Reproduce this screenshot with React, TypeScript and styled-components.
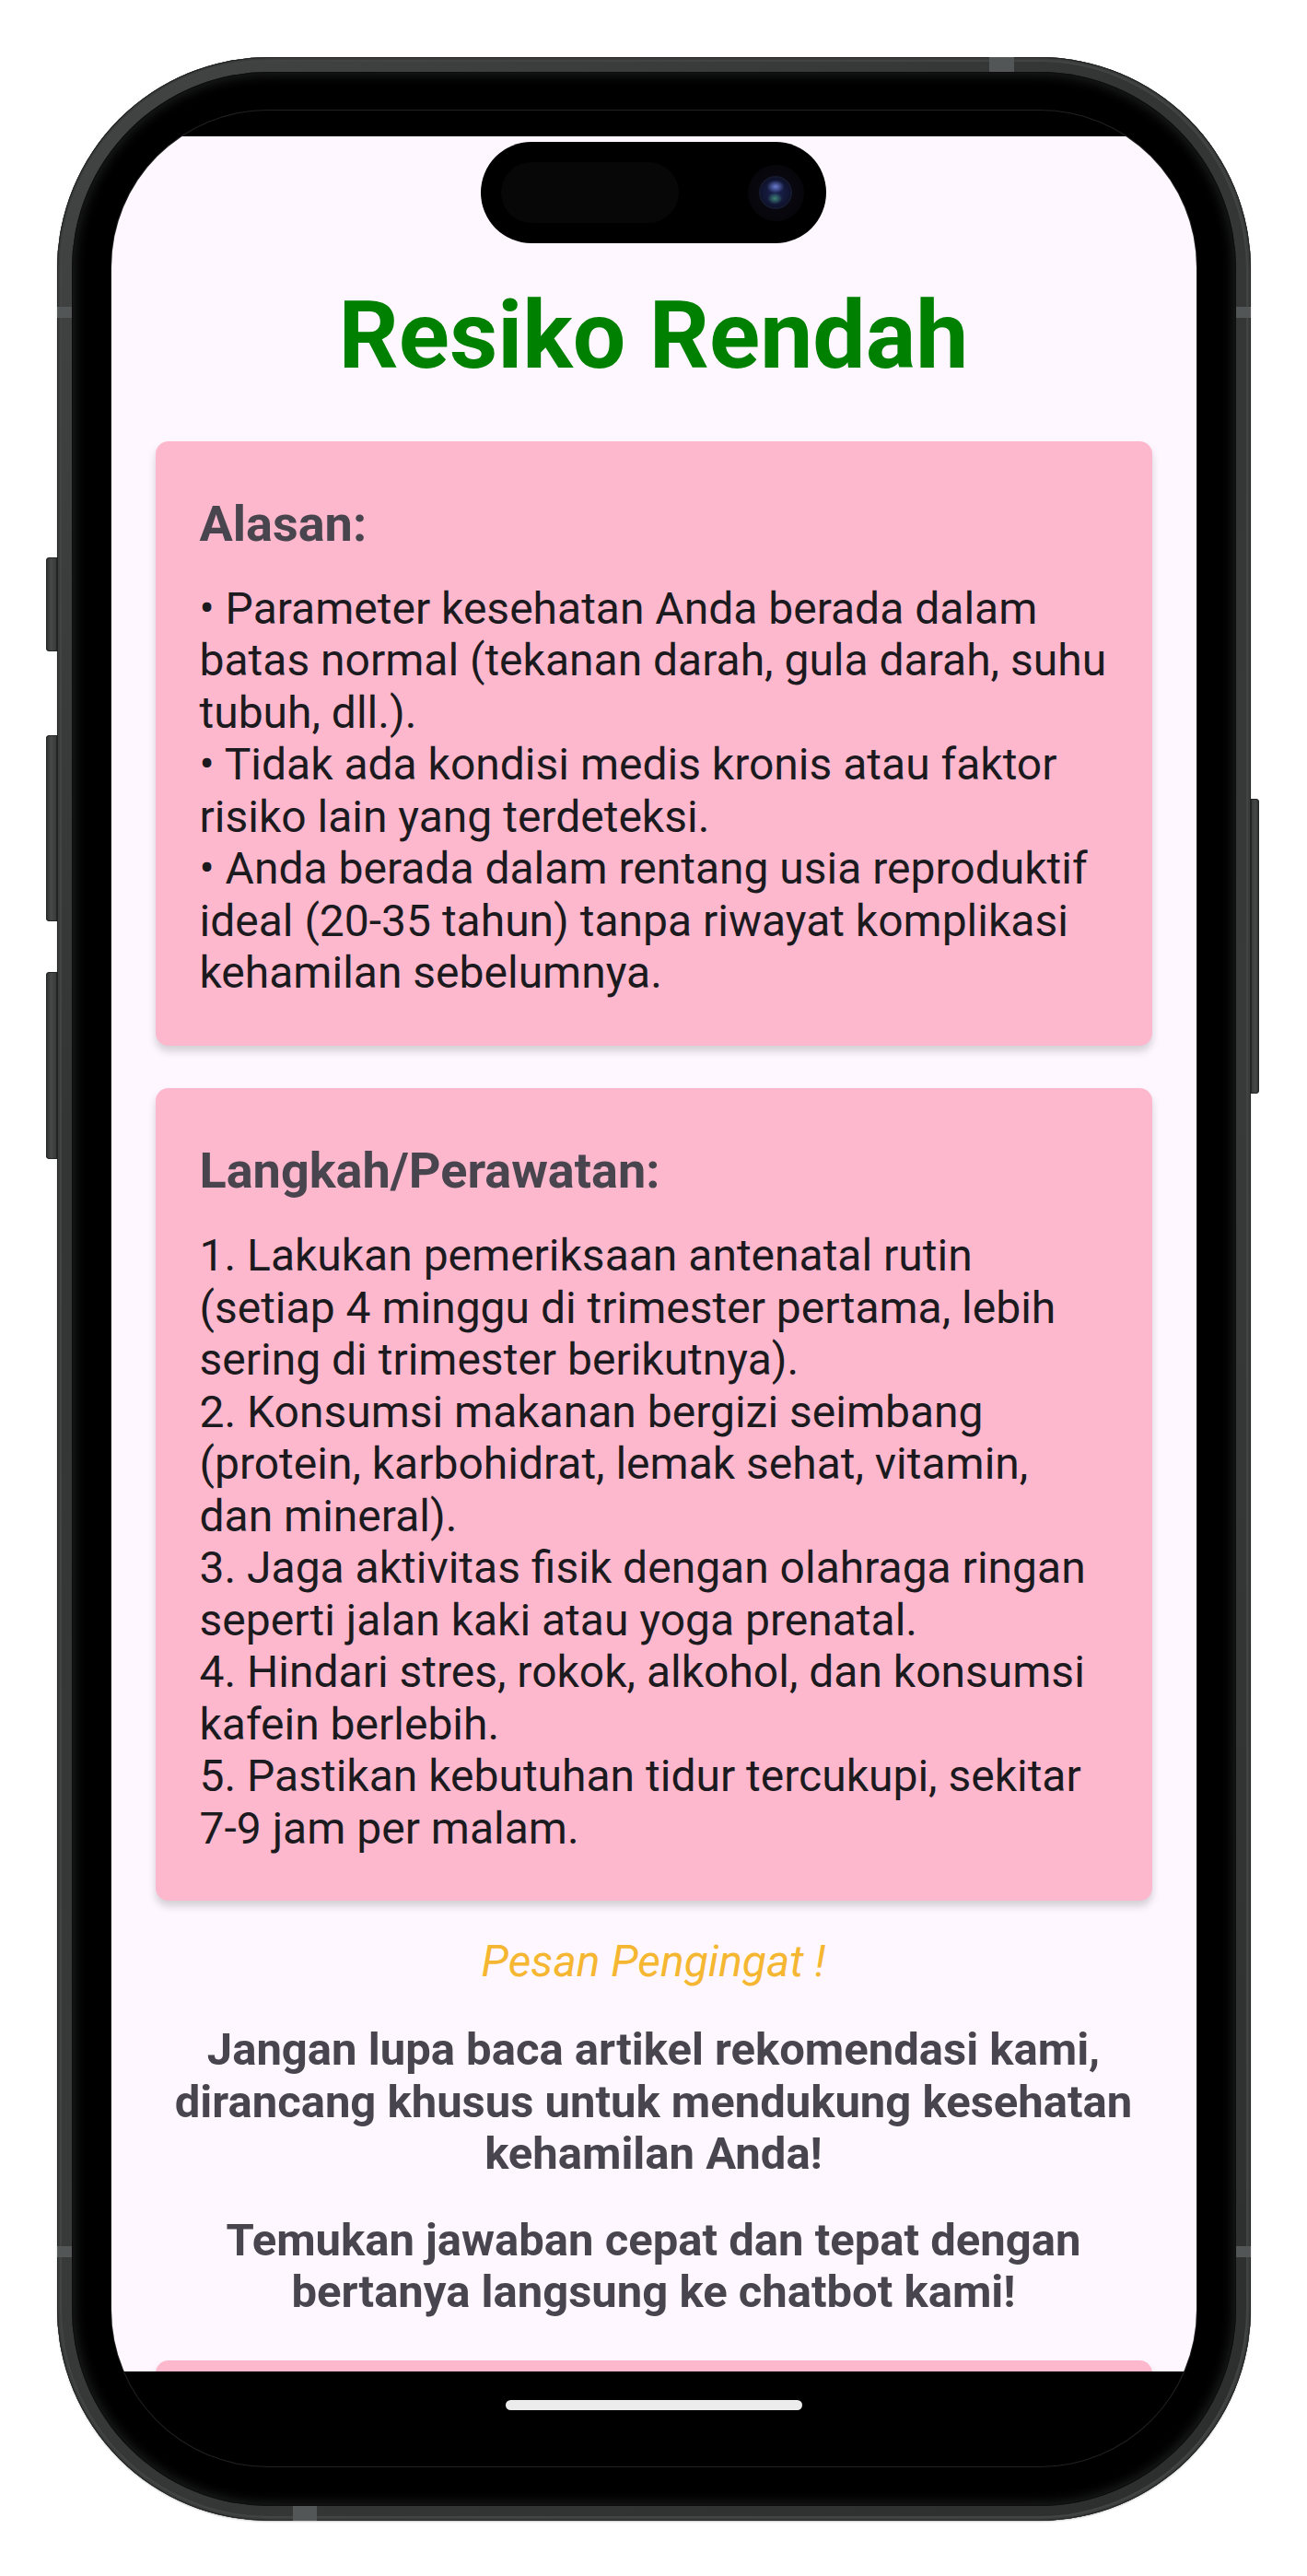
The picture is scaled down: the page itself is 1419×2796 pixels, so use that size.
import React from "react";
import styled, { createGlobalStyle } from "styled-components";

const GlobalStyle = createGlobalStyle`
  html, body {
    margin: 0;
    padding: 0;
    background: #ffffff;
  }
  body {
    font-family: Roboto, "Noto Sans", "Liberation Sans", Arial, sans-serif;
    -webkit-font-smoothing: antialiased;
  }
  * { box-sizing: border-box; }
`;

const Stage = styled.main`
  width: 1419px;
  height: 2796px;
  padding-top: 62px;
  display: flex;
  justify-content: center;
  align-items: flex-start;
  background: #ffffff;
`;

const Phone = styled.div`
  position: relative;
  width: 1296px;
  height: 2674px;
  padding: 16px;
  border-radius: 230px;
  background: linear-gradient(135deg, #434545 0%, #333535 30%, #383a3a 60%, #2c2e2e 100%);
  box-shadow:
    inset 0 0 0 1px #222323,
    inset 0 0 0 3px #3b3d3d,
    inset 0 0 0 5px #424444,
    0 1px 2px rgba(0, 0, 0, 0.25);
`;

const SideButton = styled.div<{ $side: "left" | "right"; $top: number; $height: number }>`
  position: absolute;
  top: ${(p) => p.$top}px;
  height: ${(p) => p.$height}px;
  width: ${(p) => (p.$side === "left" ? 12 : 9)}px;
  ${(p) => (p.$side === "left" ? "left: -12px;" : "right: -9px;")}
  border-radius: ${(p) => (p.$side === "left" ? "4px 0 0 4px" : "0 4px 4px 0")};
  background: linear-gradient(
    ${(p) => (p.$side === "left" ? "90deg" : "270deg")},
    #2c2e2e 0%,
    #474949 45%,
    #363838 100%
  );
  box-shadow: inset 0 0 0 1px #232525;
`;

const AntennaBand = styled.div<{ $pos: "top" | "bottom" | "left" | "right"; $offset: number }>`
  position: absolute;
  background: #535656;
  ${(p) =>
    p.$pos === "top"
      ? `top: 0; left: ${p.$offset}px; width: 27px; height: 16px;`
      : p.$pos === "bottom"
      ? `bottom: 0; left: ${p.$offset}px; width: 26px; height: 16px;`
      : p.$pos === "left"
      ? `left: 0; top: ${p.$offset}px; width: 16px; height: 12px;`
      : `right: 0; top: ${p.$offset}px; width: 16px; height: 12px;`}
`;

const Bezel = styled.div`
  width: 100%;
  height: 100%;
  border-radius: 214px;
  background: #000000;
  padding: 42px 43px 43px 43px;
  box-shadow:
    inset 0 0 0 1px #0d0d0d,
    inset 0 0 14px 2px rgba(70, 72, 72, 0.5);
`;

const Screen = styled.div`
  width: 100%;
  height: 100%;
  border-radius: 170px;
  overflow: hidden;
  background: #000000;
  padding-top: 28px;
  display: flex;
  flex-direction: column;
  box-shadow: 0 0 0 1px rgba(110, 110, 110, 0.3);
`;

const Content = styled.div`
  flex-shrink: 0;
  height: 2426px;
  overflow: hidden;
  background: #fef7ff;
  padding: 157px 48px 0;
  display: flex;
  flex-direction: column;
`;

const Title = styled.h1`
  margin: 0 0 54px;
  text-align: center;
  font-size: 102px;
  line-height: 1.172;
  font-weight: 700;
  color: #008000;
`;

const CardStack = styled.div`
  display: flex;
  flex-direction: column;
  gap: 46px;
`;

const Card = styled.section<{ $peek?: boolean }>`
  background: #feb8cd;
  border-radius: 14px;
  padding: 58px 48px 50px;
  box-shadow: 0 6px 9px rgba(0, 0, 0, 0.17);
  ${(p) => (p.$peek ? "height: 160px; flex-shrink: 0;" : "")}
`;

const CardHeading = styled.h2`
  margin: 0 0 33px;
  font-size: 54px;
  line-height: 1.172;
  font-weight: 700;
  color: #49454f;
`;

const CardLine = styled.p`
  margin: 0;
  font-size: 48px;
  line-height: 56.5px;
  font-weight: 400;
  color: #1b1a1e;
`;

const Reminder = styled.p`
  margin: 38px 0 0;
  text-align: center;
  font-size: 48px;
  line-height: 1.172;
  font-style: italic;
  font-weight: 400;
  color: #f5b731;
`;

const Note = styled.p<{ $gap: number }>`
  margin: ${(p) => p.$gap}px 0 0;
  text-align: center;
  font-size: 49px;
  line-height: 56.5px;
  font-weight: 700;
  color: #49454f;
`;

const PeekWrap = styled.div`
  margin-top: 45px;
`;

const BottomArea = styled.div`
  flex: 1;
  display: flex;
  justify-content: center;
  padding-top: 31px;
`;

const HomeIndicator = styled.div`
  width: 322px;
  height: 11px;
  border-radius: 6px;
  background: #ececec;
`;

const Island = styled.div`
  position: absolute;
  left: 460px;
  top: 92px;
  width: 375px;
  height: 110px;
  border-radius: 55px;
  background: #000000;
  display: flex;
  align-items: center;
  justify-content: space-between;
  padding: 0 24px 0 22px;
`;

const IslandPill = styled.div`
  width: 193px;
  height: 66px;
  border-radius: 33px;
  background: #070707;
`;

const Camera = styled.div`
  width: 61px;
  height: 61px;
  border-radius: 50%;
  background: radial-gradient(circle, #0c0a12 0%, #07060b 70%, #040305 100%);
  display: flex;
  align-items: center;
  justify-content: center;
`;

const Lens = styled.div`
  width: 32px;
  height: 32px;
  border-radius: 50%;
  background:
    radial-gradient(ellipse 30% 22% at 50% 30%, rgba(120, 140, 230, 0.85), transparent 100%),
    radial-gradient(ellipse 26% 20% at 48% 70%, rgba(90, 200, 150, 0.6), transparent 100%),
    radial-gradient(circle, #1a2152 0%, #121736 55%, #0a0c1e 100%);
  box-shadow: 0 0 0 2px #161a30;
`;

const reasons = [
  "• Parameter kesehatan Anda berada dalam batas normal (tekanan darah, gula darah, suhu tubuh, dll.).",
  "• Tidak ada kondisi medis kronis atau faktor risiko lain yang terdeteksi.",
  "• Anda berada dalam rentang usia reproduktif ideal (20-35 tahun) tanpa riwayat komplikasi kehamilan sebelumnya.",
];

const steps = [
  "1. Lakukan pemeriksaan antenatal rutin (setiap 4 minggu di trimester pertama, lebih sering di trimester berikutnya).",
  "2. Konsumsi makanan bergizi seimbang (protein, karbohidrat, lemak sehat, vitamin, dan mineral).",
  "3. Jaga aktivitas fisik dengan olahraga ringan seperti jalan kaki atau yoga prenatal.",
  "4. Hindari stres, rokok, alkohol, dan konsumsi kafein berlebih.",
  "5. Pastikan kebutuhan tidur tercukupi, sekitar 7-9 jam per malam.",
];

export default function App() {
  return (
    <>
      <GlobalStyle />
      <Stage>
        <Phone>
          <SideButton $side="left" $top={543} $height={102} />
          <SideButton $side="left" $top={736} $height={202} />
          <SideButton $side="left" $top={993} $height={203} />
          <SideButton $side="right" $top={805} $height={320} />
          <AntennaBand $pos="top" $offset={1012} />
          <AntennaBand $pos="bottom" $offset={256} />
          <AntennaBand $pos="left" $offset={271} />
          <AntennaBand $pos="right" $offset={271} />
          <AntennaBand $pos="left" $offset={2376} />
          <AntennaBand $pos="right" $offset={2376} />
          <Bezel>
            <Screen>
              <Content>
                <Title>Resiko Rendah</Title>
                <CardStack>
                  <Card>
                    <CardHeading>Alasan:</CardHeading>
                    {reasons.map((r) => (
                      <CardLine key={r}>{r}</CardLine>
                    ))}
                  </Card>
                  <Card>
                    <CardHeading>Langkah/Perawatan:</CardHeading>
                    {steps.map((s) => (
                      <CardLine key={s}>{s}</CardLine>
                    ))}
                  </Card>
                </CardStack>
                <Reminder>Pesan Pengingat !</Reminder>
                <Note $gap={40}>
                  Jangan lupa baca artikel rekomendasi kami, dirancang khusus untuk mendukung kesehatan kehamilan Anda!
                </Note>
                <Note $gap={37}>Temukan jawaban cepat dan tepat dengan bertanya langsung ke chatbot kami!</Note>
                <PeekWrap>
                  <Card $peek />
                </PeekWrap>
              </Content>
              <BottomArea>
                <HomeIndicator />
              </BottomArea>
            </Screen>
          </Bezel>
          <Island>
            <IslandPill />
            <Camera>
              <Lens />
            </Camera>
          </Island>
        </Phone>
      </Stage>
    </>
  );
}
